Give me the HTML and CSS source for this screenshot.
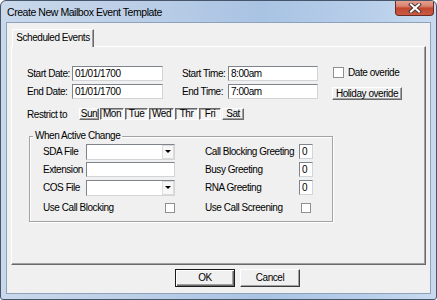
FILE: index.html
```html
<!DOCTYPE html>
<html>
<head>
<meta charset="utf-8">
<link rel="stylesheet" href="styles.css">
</head>
<body>
<div class="window">
  <div class="titlebar">
    <span class="title">Create New Mailbox Event Template</span>
    <div class="close">
      <svg width="14" height="10" viewBox="0 0 14 10">
        <path d="M3 1.5 L11 8.5 M11 1.5 L3 8.5" stroke="#4a3a3a" stroke-width="4" stroke-linecap="square"/>
        <path d="M3 1.5 L11 8.5 M11 1.5 L3 8.5" stroke="#ffffff" stroke-width="2" stroke-linecap="square"/>
      </svg>
    </div>
  </div>
  <div class="client">
    <div class="tabs"><div class="tab">Scheduled Events</div></div>
    <div class="pane">
      <div class="form-row">
        <span class="lbl lbl-date">Start Date:</span>
        <span class="input w-date">01/01/1700</span>
        <span class="lbl lbl-time">Start Time:</span>
        <span class="input w-time">8:00am</span>
        <span class="check check-lg"></span>
        <span class="lbl check-label">Date overide</span>
      </div>
      <div class="form-row row2">
        <span class="lbl lbl-date">End Date:</span>
        <span class="input w-date">01/01/1700</span>
        <span class="lbl lbl-time">End Time:</span>
        <span class="input w-time">7:00am</span>
        <span class="small-btn raised">Holiday overide</span>
      </div>
      <div class="form-row row3">
        <span class="lbl lbl-restrict">Restrict to</span>
        <div class="days">
          <span class="day raised d-sun">Sun</span>
          <span class="day pressed d-mon">Mon</span>
          <span class="day pressed d-tue">Tue</span>
          <span class="day pressed d-wed">Wed</span>
          <span class="day pressed d-thr">Thr</span>
          <span class="day pressed d-fri">Fri</span>
          <span class="day raised d-sat">Sat</span>
        </div>
      </div>
      <div class="group">
        <span class="legend">When Active Change</span>
        <div class="grid">
          <span class="lbl">SDA File</span>
          <span class="combo"><span class="dd"></span></span>
          <span></span>
          <span class="lbl">Call Blocking Greeting</span>
          <span class="input num">0</span>

          <span class="lbl">Extension</span>
          <span class="input"></span>
          <span></span>
          <span class="lbl">Busy Greeting</span>
          <span class="input num">0</span>

          <span class="lbl">COS File</span>
          <span class="combo"><span class="dd"></span></span>
          <span></span>
          <span class="lbl">RNA Greeting</span>
          <span class="input num">0</span>

          <span class="lbl last">Use Call Blocking</span>
          <span class="last cb-cell-left"><span class="check"></span></span>
          <span class="last"></span>
          <span class="lbl last">Use Call Screening</span>
          <span class="last cb-cell-right"><span class="check"></span></span>
        </div>
      </div>
    </div>
    <div class="buttons">
      <span class="btn default">OK</span>
      <span class="btn raised">Cancel</span>
    </div>
  </div>
</div>
</body>
</html>
```
FILE: styles.css
```css
html, body {
  margin: 0;
  padding: 0;
  background: #ffffff;
}
body {
  font-family: "Liberation Sans", Arial, sans-serif;
  font-size: 10px;
  letter-spacing: -0.45px;
  color: #000;
  white-space: nowrap;
}
.window {
  box-sizing: border-box;
  width: 437px;
  height: 300px;
  border: 1px solid #46556a;
  border-radius: 6px 6px 3px 3px;
  background: linear-gradient(to right, #c9d8eb 0%, #bccfe7 30%, #a9c3e3 60%, #b8cfea 85%, #c9daee 100%);
  display: flex;
  flex-direction: column;
  overflow: hidden;
}
.titlebar {
  height: 21px;
  display: flex;
  align-items: center;
  padding-left: 6px;
  flex: none;
}
.title {
  font-size: 10.5px;
  letter-spacing: -0.45px;
  color: #000;
  margin-top: 1px;
}
.close {
  margin-left: auto;
  margin-right: 2px;
  align-self: flex-start;
  width: 39px;
  height: 16px;
  margin-top: -1px;
  box-sizing: border-box;
  border: 1px solid #6b2a22;
  border-top: none;
  border-radius: 0 0 4px 4px;
  background: linear-gradient(#e8a393 0%, #d98672 40%, #c2472f 55%, #c95a42 100%);
  display: flex;
  align-items: center;
  justify-content: center;
}
.client {
  flex: none;
  height: 272px;
  margin: 0 5px;
  box-sizing: border-box;
  border: 1px solid #8ea3bb;
  background: #f0f0f0;
  padding: 6px 0 0 4px;
}
.tabs {
  display: flex;
  height: 17px;
  padding-left: 1px;
}
.tab {
  position: relative;
  width: 82px;
  height: 18px;
  box-sizing: border-box;
  border: 1px solid #ffffff;
  border-right-color: #696969;
  border-bottom: none;
  box-shadow: inset -1px 0 0 #a0a0a0;
  background: #f0f0f0;
  text-align: center;
  line-height: 15px;
}
.pane {
  width: 415px;
  height: 219px;
  box-sizing: border-box;
  border: 1px solid;
  border-color: #ffffff #696969 #696969 #ffffff;
  box-shadow: inset -1px -1px 0 #a0a0a0;
  padding-top: 19px;
}
.form-row {
  display: flex;
  align-items: center;
  height: 15px;
  padding-left: 15px;
}
.row2 { margin-top: 3px; }
.row3 { margin-top: 9px; height: 12px; }
.lbl { white-space: nowrap; }
.lbl-date { width: 45px; flex: none; }
.lbl-time { width: 46px; margin-left: 19px; flex: none; }
.lbl-restrict { width: 52px; flex: none; }
.input {
  box-sizing: border-box;
  height: 15px;
  background: #ffffff;
  border: 1px solid;
  border-color: #7f848c #d2d4d8 #d2d4d8 #7f848c;
  padding-left: 2px;
  line-height: 13px;
  display: block;
  flex: none;
}
.w-date { width: 91px; }
.w-time { width: 90px; }
.check {
  display: block;
  box-sizing: border-box;
  width: 10px;
  height: 10px;
  background: #ffffff;
  border: 1px solid #8e8f8f;
  flex: none;
}
.check-lg {
  width: 11px;
  height: 11px;
  margin-left: 15px;
  margin-top: -3px;
}
.check-label { margin-left: 4px; margin-top: -3px; }
.raised {
  border: 1px solid;
  border-color: #ffffff #696969 #696969 #ffffff;
  box-shadow: inset -1px -1px 0 #a0a0a0;
}
.pressed {
  border: 1px solid;
  border-color: #696969 #ffffff #ffffff #696969;
  box-shadow: inset 1px 1px 0 #a0a0a0;
  background: #f4f4f4;
}
.small-btn {
  box-sizing: border-box;
  margin-left: 14px;
  width: 70px;
  height: 13px;
  line-height: 11px;
  text-align: center;
  background: #f0f0f0;
  margin-top: 3px;
  flex: none;
}
.days {
  display: flex;
  gap: 1px;
}
.day {
  box-sizing: border-box;
  height: 12px;
  line-height: 10px;
  text-align: center;
}
.d-sun { width: 20px; }
.d-mon { width: 24px; }
.d-tue { width: 23px; }
.d-wed { width: 25px; }
.d-thr { width: 23px; }
.d-fri { width: 22px; }
.d-sat { width: 22px; }
.group {
  position: relative;
  margin: 16px 0 0 17px;
  width: 304px;
  height: 86px;
  box-sizing: border-box;
  border: 1px solid #a3a3a3;
  box-shadow: inset 1px 1px 0 #ffffff, 1px 1px 0 #ffffff;
  padding: 7px 0 0 13px;
}
.legend {
  position: absolute;
  top: -8px;
  left: 3px;
  padding: 0 2px;
  background: #f0f0f0;
  line-height: 14px;
}
.grid {
  display: grid;
  grid-template-columns: 43px 89px 30px 94px 14px;
  grid-template-rows: 15px 15px 15px auto;
  row-gap: 3px;
  align-items: center;
}
.grid .last { margin-top: 5px; height: 10px; line-height: 10px; }
.combo {
  box-sizing: border-box;
  height: 16px;
  background: #ffffff;
  border: 1px solid;
  border-color: #7f848c #d2d4d8 #d2d4d8 #7f848c;
  display: flex;
  justify-content: flex-end;
}
.dd {
  width: 12px;
  box-sizing: border-box;
  border: 1px solid #dcdcdc;
  background: #f7f7f7;
  display: flex;
  align-items: center;
  justify-content: center;
}
.dd::after {
  content: "";
  width: 0;
  height: 0;
  border-left: 3px solid transparent;
  border-right: 3px solid transparent;
  border-top: 3px solid #000;
}
.num { width: 14px; }
.cb-cell-left { display: flex; justify-content: flex-end; }
.cb-cell-right { display: flex; justify-content: flex-start; padding-left: 2px; }
.buttons {
  display: flex;
  padding-left: 164px;
  margin-top: 4px;
  gap: 5px;
}
.btn {
  box-sizing: border-box;
  width: 60px;
  height: 18px;
  line-height: 16px;
  text-align: center;
  background: #f0f0f0;
}
.btn.raised {
  border-color: #ffffff #3c3c3c #3c3c3c #ffffff;
}
.btn.default {
  border: 1px solid #1a1a1a;
  box-shadow: inset 1px 1px 0 #ffffff, inset -1px -1px 0 #696969, inset -2px -2px 0 #a0a0a0;
}
```
